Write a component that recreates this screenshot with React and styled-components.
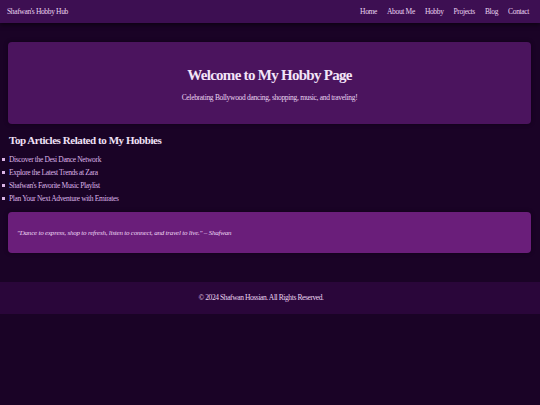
import React from 'react';
import styled, { createGlobalStyle } from 'styled-components';

const GlobalStyle = createGlobalStyle`
  html, body {
    margin: 0;
    padding: 0;
    background: #1a0326;
    font-family: "Liberation Serif", "Times New Roman", serif;
    color: #f0e0f6;
  }
`;

const Header = styled.header`
  display: flex;
  align-items: center;
  justify-content: space-between;
  height: 23px;
  padding: 0 11px 0 7px;
  background: #3d0f52;
  box-shadow: 0 2px 4px rgba(0, 0, 0, 0.5);
`;

const Brand = styled.div`
  font-size: 7.5px;
  letter-spacing: -0.35px;
  color: #ead4f1;
`;

const Nav = styled.nav`
  display: flex;
  gap: 10px;
`;

const NavLink = styled.a`
  font-size: 7.5px;
  letter-spacing: -0.35px;
  color: #ead4f1;
  text-decoration: none;
`;

const Main = styled.main`
  padding: 19px 0 28.5px;
`;

const Hero = styled.section`
  display: flex;
  flex-direction: column;
  align-items: center;
  justify-content: center;
  height: 82px;
  box-sizing: border-box;
  padding-top: 3px;
  margin: 0 9px 0 8px;
  background: #4b145e;
  border-radius: 4px;
  box-shadow: 0 0 4px rgba(0, 0, 0, 0.4);
`;

const Title = styled.h1`
  margin: 0 0 10.5px;
  font-size: 15px;
  line-height: 16.5px;
  font-weight: bold;
  letter-spacing: -0.72px;
  color: #f3e4f8;
`;

const Subtitle = styled.p`
  margin: 0;
  font-size: 7.5px;
  line-height: 8.5px;
  letter-spacing: -0.3px;
  color: #ead4f1;
`;

const Heading = styled.h2`
  margin: 10px 0 7px 9px;
  font-size: 11px;
  line-height: 12px;
  font-weight: bold;
  letter-spacing: -0.44px;
  color: #f0e0f6;
`;

const List = styled.ul`
  margin: 0;
  padding-left: 2px;
  list-style: none;
`;

const Item = styled.li`
  display: flex;
  align-items: center;
  height: 13px;
  font-size: 7.5px;
  letter-spacing: -0.35px;
  color: #dcb4e6;

  &::before {
    content: '';
    width: 2.5px;
    height: 2.5px;
    margin-right: 4.5px;
    background: #dcb4e6;
  }
`;

const Quote = styled.blockquote`
  margin: 7px 9px 0 8px;
  height: 41px;
  display: flex;
  align-items: center;
  padding: 0 9px;
  background: #6a1e7a;
  border-radius: 4px;
  box-shadow: 0 0 4px rgba(0, 0, 0, 0.4);
  font-size: 7px;
  letter-spacing: -0.21px;
  font-style: italic;
  color: #ecd6f3;
`;

const Footer = styled.footer`
  display: flex;
  align-items: center;
  justify-content: center;
  height: 32px;
  padding-right: 18px;
  background: #2a063a;
  font-size: 7.5px;
  letter-spacing: -0.4px;
  color: #ead4f1;
`;

const links = ['Home', 'About Me', 'Hobby', 'Projects', 'Blog', 'Contact'];

const articles = [
  'Discover the Desi Dance Network',
  'Explore the Latest Trends at Zara',
  "Shafwan's Favorite Music Playlist",
  'Plan Your Next Adventure with Emirates',
];

export default function App() {
  return (
    <>
      <GlobalStyle />
      <Header>
        <Brand>Shafwan's Hobby Hub</Brand>
        <Nav>
          {links.map((l) => (
            <NavLink key={l} href="#">{l}</NavLink>
          ))}
        </Nav>
      </Header>
      <Main>
        <Hero>
          <Title>Welcome to My Hobby Page</Title>
          <Subtitle>Celebrating Bollywood dancing, shopping, music, and traveling!</Subtitle>
        </Hero>
        <Heading>Top Articles Related to My Hobbies</Heading>
        <List>
          {articles.map((a) => (
            <Item key={a}>{a}</Item>
          ))}
        </List>
        <Quote>"Dance to express, shop to refresh, listen to connect, and travel to live." – Shafwan</Quote>
      </Main>
      <Footer>© 2024 Shafwan Hossian. All Rights Reserved.</Footer>
    </>
  );
}
